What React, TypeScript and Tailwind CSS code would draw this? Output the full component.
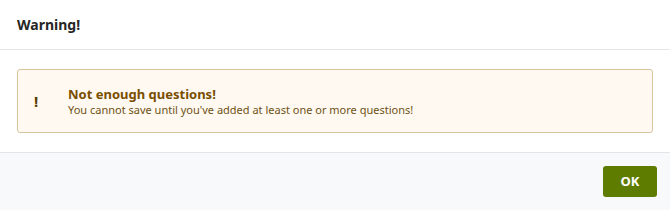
export default function App() {
  return (
    <div className="w-[670px] h-[210px] bg-white flex flex-col" style={{ fontFamily: '"Noto Sans", sans-serif' }}>
      <div className="h-[50px] flex items-center px-[17px] border-b border-[#e6e6e6]">
        <h1 className="text-[14px] font-bold text-[#262626] leading-none">Warning!</h1>
      </div>
      <div className="h-[102px] px-[17px] pt-[19px]">
        <div className="h-[64px] border border-[#d8c59e] bg-[#fff9f2] rounded-[3px] flex items-center">
          <div className="w-[50px] pl-[16px] text-[15px] font-bold text-[#5a3c00] leading-none">!</div>
          <div className="flex flex-col gap-[1px]">
            <div className="text-[13px] font-bold text-[#7a4e00] leading-[16px]">Not enough questions!</div>
            <div className="text-[11px] text-[#6e5214] leading-[14px]">You cannot save until you've added at least one or more questions!</div>
          </div>
        </div>
      </div>
      <div className="flex-1 bg-[#f8f9fb] border-t border-[#e3e5e8] flex items-start justify-end pr-[13px] pt-[13px]">
        <button className="w-[54px] h-[31px] bg-[#5e7d00] rounded-[3px] text-white text-[13px] font-bold">OK</button>
      </div>
    </div>
  );
}
